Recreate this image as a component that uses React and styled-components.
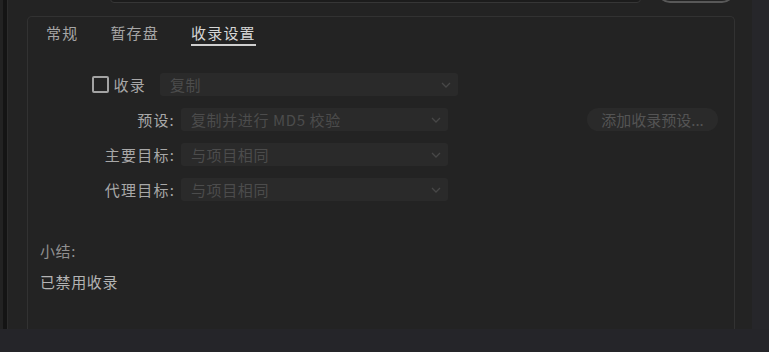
import styled, { createGlobalStyle } from 'styled-components'

const Global = createGlobalStyle`
    html, body {
        margin: 0;
        padding: 0;
        background: #252529;
        font-family: "Noto Sans CJK SC", "Noto Sans", "Liberation Sans", sans-serif;
    }
`

const Screen = styled.div`
    width: 769px;
    height: 352px;
    display: flex;
    flex-direction: column;
    overflow: hidden;
    background: #252529;
`
const Main = styled.div`
    height: 329px;
    display: flex;
`
const LeftEdge = styled.div`
    width: 3px;
    background: #222222;
    border-right: 4px solid #141414;
    box-shadow: 1px 0 0 #2c2c2c;
    margin-right: 1px;
`
const Content = styled.div`
    flex: 1;
    display: flex;
    flex-direction: column;
    background: #232323;
`
const RightStrip = styled.div`
    width: 17px;
    background: #26262a;
`
const TopRow = styled.div`
    display: flex;
    height: 26px;
    margin-top: -23px;
`
const TopInput = styled.div`
    margin-left: 102px;
    width: 529px;
    border: 1px solid #363636;
    border-radius: 4px;
    background: #1c1c1c;
`
const TopButton = styled.div`
    margin-left: 16px;
    width: 74px;
    border: 2px solid #585858;
    border-radius: 13px;
`
const Panel = styled.div`
    flex: 1;
    margin: 13px 17px 0 19px;
    border: 1px solid #323232;
    border-bottom: 0;
    border-radius: 5px 5px 0 0;
    display: flex;
    flex-direction: column;
`
const Tabs = styled.div`
    display: flex;
    gap: 32px;
    padding: 6px 0 0 18px;
`
const Tab = styled.div`
    font-size: 15px;
    line-height: 20px;
    letter-spacing: 1.2px;
    padding-bottom: 1px;
    color: ${p => (p.$active ? '#d6d6d6' : '#a6a6a6')};
    border-bottom: 2px solid ${p => (p.$active ? '#cfcfcf' : 'transparent')};
`
const Form = styled.div`
    display: flex;
    flex-direction: column;
    gap: 12px;
    margin-top: 27px;
`
const Row = styled.div`
    display: flex;
    align-items: center;
    height: 23px;
`
const Label = styled.div`
    width: ${p => p.$width}px;
    display: flex;
    justify-content: flex-end;
    align-items: center;
    gap: 5px;
    font-size: 15px;
    letter-spacing: 1.2px;
    color: #a8a8a8;
    white-space: nowrap;
`
const Checkbox = styled.span`
    width: 13px;
    height: 13px;
    border: 2px solid #a3a3a3;
    border-radius: 2px;
`
const Select = styled.div`
    margin-left: ${p => p.$gap}px;
    width: ${p => p.$width}px;
    height: 23px;
    box-sizing: border-box;
    background: #2a2a2a;
    border-radius: 3px;
    display: flex;
    align-items: center;
    justify-content: space-between;
    padding: 0 7px 0 10px;
    font-size: 15px;
    letter-spacing: 0.6px;
    color: #4c4c4c;
    white-space: nowrap;
`
const PresetButton = styled.div`
    margin-left: auto;
    margin-right: 16px;
    width: 131px;
    height: 23px;
    border-radius: 12px;
    background: #2a2a2a;
    color: #545454;
    font-size: 15px;
    display: flex;
    align-items: center;
    justify-content: center;
`
const Summary = styled.div`
    margin: 40px 0 0 12px;
    display: flex;
    flex-direction: column;
    gap: 11px;
`
const SummaryLine = styled.div`
    font-size: 15px;
    line-height: 20px;
    letter-spacing: 0.6px;
    color: ${p => (p.$strong ? '#b4b4b4' : '#909090')};
`
const BottomBar = styled.div`
    flex: 1;
    background: #252529;
`

const Chevron = () => (
    <svg width="10" height="6" viewBox="0 0 10 6">
        <path d="M1 1 L5 5 L9 1" fill="none" stroke="#474747" strokeWidth="1.3" />
    </svg>
)

const fields = [
    { label: '预设:', value: '复制并进行 MD5 校验', button: true },
    { label: '主要目标:', value: '与项目相同' },
    { label: '代理目标:', value: '与项目相同' },
]

export default function App() {
    return (
        <Screen>
            <Global />
            <Main>
                <LeftEdge />
                <Content>
                    <TopRow>
                        <TopInput />
                        <TopButton />
                    </TopRow>
                    <Panel>
                        <Tabs>
                            <Tab>常规</Tab>
                            <Tab>暂存盘</Tab>
                            <Tab $active>收录设置</Tab>
                        </Tabs>
                        <Form>
                            <Row>
                                <Label $width={118}>
                                    <Checkbox />
                                    收录
                                </Label>
                                <Select $gap={14} $width={298}>
                                    复制
                                    <Chevron />
                                </Select>
                            </Row>
                            {fields.map(f => (
                                <Row key={f.label}>
                                    <Label $width={147}>{f.label}</Label>
                                    <Select $gap={6} $width={267}>
                                        {f.value}
                                        <Chevron />
                                    </Select>
                                    {f.button ? <PresetButton>添加收录预设...</PresetButton> : null}
                                </Row>
                            ))}
                        </Form>
                        <Summary>
                            <SummaryLine>小结:</SummaryLine>
                            <SummaryLine $strong>已禁用收录</SummaryLine>
                        </Summary>
                    </Panel>
                </Content>
                <RightStrip />
            </Main>
            <BottomBar />
        </Screen>
    )
}
